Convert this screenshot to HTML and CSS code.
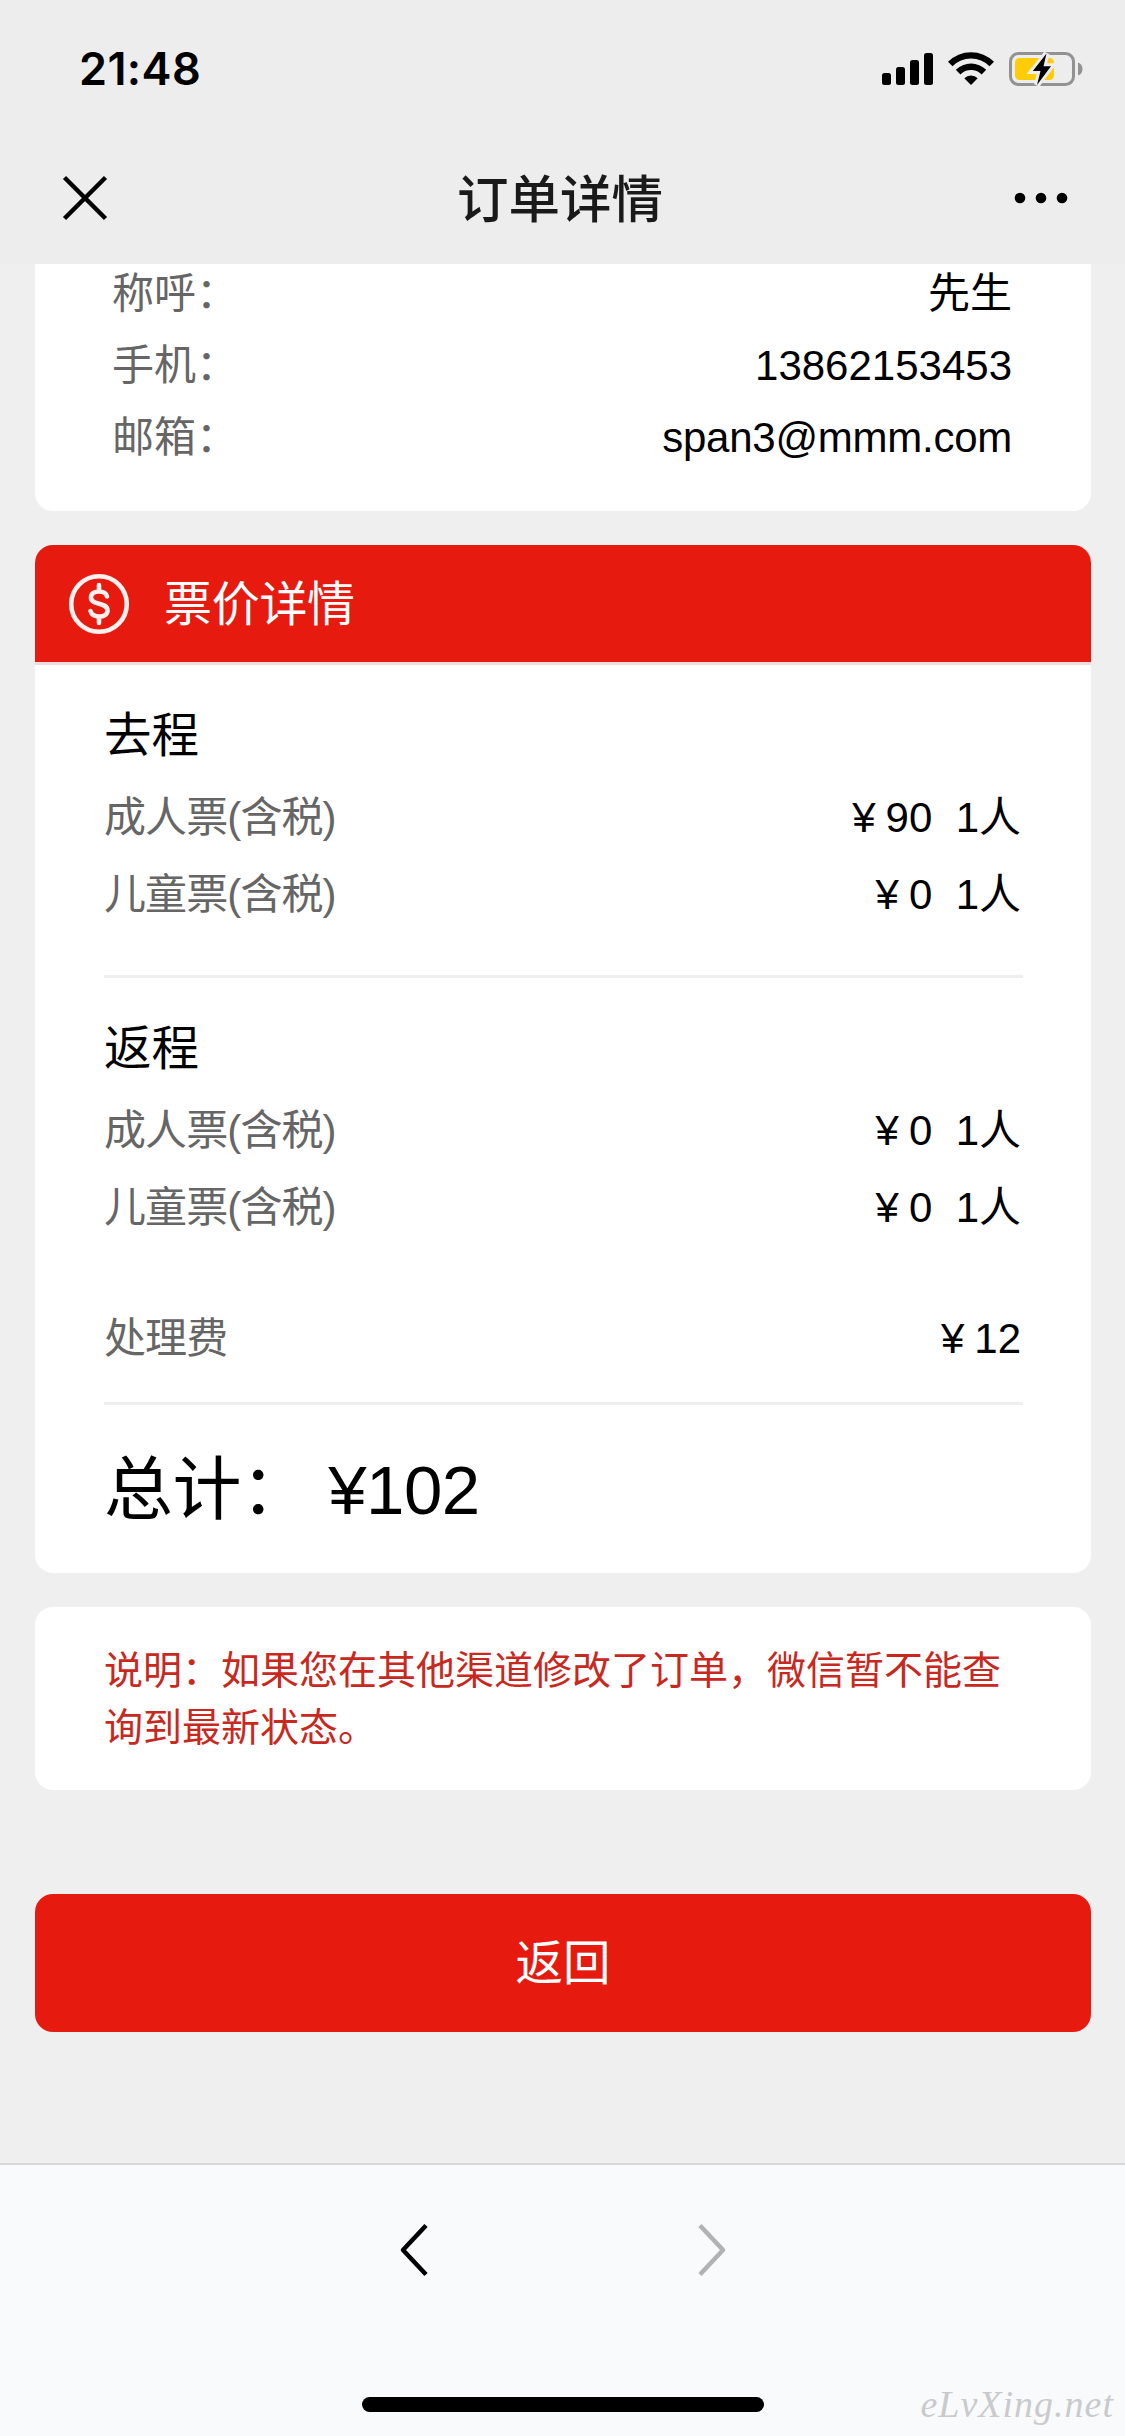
FILE: index.html
```html
<!DOCTYPE html>
<html lang="zh-CN">
<head>
	<meta charset="utf-8">
	<title>订单详情</title>
	<meta name="viewport" content="width=device-width, initial-scale=1">
	<link rel="stylesheet" href="styles.css">
</head>
<body>
	<header class="top">
		<div class="status">
			<span class="time">21:48</span>
			<svg class="status-icons" width="202" height="36" viewBox="0 0 202 36">
				<rect x="1" y="22" width="9" height="12" rx="2.5"/>
				<rect x="15" y="16" width="9" height="18" rx="2.5"/>
				<rect x="29" y="9" width="9" height="25" rx="2.5"/>
				<rect x="43" y="2" width="9" height="32" rx="2.5"/>
				<path d="M67 10.8A32.500 32.500 0 0 1 113 10.800L108.500 15.300A26 26 0 0 0 71.500 15.300Z"/>
				<path d="M74.800 18.800A21.500 21.500 0 0 1 105.200 18.800L100.600 23.400A15 15 0 0 0 79.400 23.400Z"/>
				<path d="M83.300 27.200A9.500 9.500 0 0 1 96.700 27.200L90 34Z"/>
				<rect class="battery-case" x="129.500" y="2.500" width="63" height="31" rx="8"/>
				<path class="battery-tip" d="M197 11.500Q201.500 13 201.500 18T197 24.500Z"/>
				<rect class="battery-level" x="134" y="7" width="39" height="22" rx="4.500"/>
				<path class="bolt" d="M165.500 2.500L151.800 20H159.500L156 34L170 15.200H162.500Z"/>
			</svg>
		</div>
		<div class="nav">
			<svg width="46" height="46" viewBox="0 0 46 46"><path class="line" d="M2.500 2.500L43.500 43.500M43.500 2.500L2.500 43.500"/></svg>
			<h1>订单详情</h1>
			<svg width="54" height="12" viewBox="0 0 54 12"><circle cx="6" cy="6" r="5.300"/><circle cx="27" cy="6" r="5.300"/><circle cx="48" cy="6" r="5.300"/></svg>
		</div>
	</header>

	<main>
		<section class="card contact">
			<div class="row"><span>称呼：</span><b>先生</b></div>
			<div class="row"><span>手机：</span><b>13862153453</b></div>
			<div class="row"><span>邮箱：</span><b class="mail">span3@mmm.com</b></div>
		</section>

		<section class="card price">
			<div class="price-head">
				<svg width="62" height="62" viewBox="0 0 62 62">
					<circle cx="31" cy="31" r="27.800"/>
					<path d="M39 23.500C38 19.500 34.500 18.500 31 18.500C26.500 18.500 23 20.500 23 24.500C23 33 39.500 28.500 39.500 37.500C39.500 41.500 35.500 43.500 31.500 43.500C27 43.500 23.500 42 22.500 38M31 12V18.500M31 43.500V50"/>
				</svg>
				<h2>票价详情</h2>
			</div>
			<div class="trip">
				<h3>去程</h3>
				<div class="row"><span>成人票(含税)</span><b><i>¥</i>90&nbsp; 1人</b></div>
				<div class="row"><span>儿童票(含税)</span><b><i>¥</i>0&nbsp; 1人</b></div>
			</div>
			<div class="trip">
				<h3>返程</h3>
				<div class="row"><span>成人票(含税)</span><b><i>¥</i>0&nbsp; 1人</b></div>
				<div class="row"><span>儿童票(含税)</span><b><i>¥</i>0&nbsp; 1人</b></div>
				<div class="row fee"><span>处理费</span><b><i>¥</i>12</b></div>
			</div>
			<div class="total">总计： ¥102</div>
		</section>

		<section class="card note">说明：如果您在其他渠道修改了订单，微信暂不能查询到最新状态。</section>

		<button class="back">返回</button>
	</main>

	<footer class="toolbar">
		<div class="arrows">
			<svg width="30" height="54" viewBox="0 0 30 54"><path class="line" d="M27 2.500L4 27L27 51.500"/></svg>
			<svg width="30" height="54" viewBox="0 0 30 54"><path class="line off" d="M3 2.500L26 27L3 51.500"/></svg>
		</div>
		<div class="home"></div>
		<span class="watermark">eLvXing.net</span>
	</footer>
</body>
</html>
```

FILE: styles.css
```css
* {
	box-sizing: border-box;
	margin: 0;
}
body {
	display: flex;
	flex-direction: column;
	width: 1125px;
	height: 2436px;
	background: #efefef;
	color: #000;
	font-family: "Liberation Sans", "Noto Sans CJK SC", sans-serif;
	font-size: 42px;
	overflow: hidden;
}
h1, h2, h3, b, i {
	font-weight: normal;
	font-style: normal;
}
svg {
	display: block;
	flex: none;
}

/* header */
.top {
	height: 264px;
	background: #ededed;
}
.status {
	display: flex;
	justify-content: space-between;
	height: 132px;
	padding: 51px 42px 0 79px;
}
.time {
	font: 600 45px/36px Inter, sans-serif;
	letter-spacing: 0.4px;
}
.battery-case {
	fill: none;
	stroke: #929292;
	stroke-width: 3;
}
.battery-tip {
	fill: #929292;
}
.battery-level {
	fill: #ffcc0a;
}
.bolt {
	stroke: #ededed;
	stroke-width: 6;
	paint-order: stroke;
}
.nav {
	display: flex;
	align-items: center;
	justify-content: space-between;
	height: 132px;
	padding: 0 57px 0 62px;
}
.nav h1 {
	padding: 3px 2px 0 0;
	color: #1a1a1a;
	font-size: 51.5px;
	font-weight: 500;
	line-height: 76px;
}
.line {
	fill: none;
	stroke: #000;
	stroke-width: 4.5;
	stroke-linejoin: round;
}
.line.off {
	stroke: #b2b2b2;
}

/* cards */
main {
	flex: 1;
	padding: 0 34px 0 35px;
}
.card {
	margin-bottom: 34px;
	border-radius: 18px;
	background: #fff;
	overflow: hidden;
}
.row {
	display: flex;
	justify-content: space-between;
}
.row span {
	color: #666;
}
.row i {
	margin-right: 10px;
}
.contact {
	height: 247px;
	padding: 0 79px 0 77px;
	border-radius: 0 0 18px 18px;
	line-height: 72px;
}
.contact .row:first-child {
	margin-top: -6px;
}
.mail {
	letter-spacing: -0.25px;
}
.price {
	height: 1028px;
}
.price-head {
	display: flex;
	align-items: center;
	gap: 34px;
	height: 120px;
	padding-left: 33px;
	border-bottom: 3px solid #f3dadd;
	background: #e71a0f;
	color: #fff;
}
.price-head svg {
	fill: none;
	stroke: #fff0ee;
	stroke-width: 4.6;
	stroke-linecap: round;
}
.price-head h2 {
	padding-bottom: 7px;
	font-size: 48px;
	letter-spacing: -0.3px;
}
.trip {
	height: 313px;
	margin: 0 68px 0 69px;
	padding: 32px 2px 0 0;
	border-bottom: 3px solid #eee;
	line-height: 77px;
}
.trip h3 {
	height: 82px;
	font-size: 47.5px;
}
.trip + .trip {
	height: 427px;
}
.trip span {
	letter-spacing: -0.9px;
}
.trip .fee {
	margin-top: 54px;
}
.total {
	padding-left: 69px;
	font-size: 69px;
	line-height: 171px;
	letter-spacing: -0.5px;
}
.note {
	height: 183px;
	padding: 35px 69px;
	color: #c9281e;
	font-size: 39px;
	line-height: 57px;
}
.back {
	display: block;
	width: 100%;
	height: 138px;
	margin-top: 104px;
	padding: 0 0 8px;
	border: 0;
	border-radius: 18px;
	background: #e71a0f;
	color: #fff;
	font: inherit;
	font-size: 47.5px;
}

/* bottom bar */
.toolbar {
	position: relative;
	height: 273px;
	border-top: 2px solid #d8d8d8;
	background: #f9fafc;
}
.arrows {
	display: flex;
	justify-content: center;
	gap: 268px;
	padding-top: 58px;
}
.home {
	width: 402px;
	height: 15px;
	margin: 120px auto 0;
	border-radius: 8px;
	background: #000;
}
.watermark {
	position: absolute;
	right: 11px;
	bottom: 10px;
	color: #c9cacc;
	font: italic 38px/44px "Liberation Serif", serif;
	letter-spacing: 1px;
}
```
